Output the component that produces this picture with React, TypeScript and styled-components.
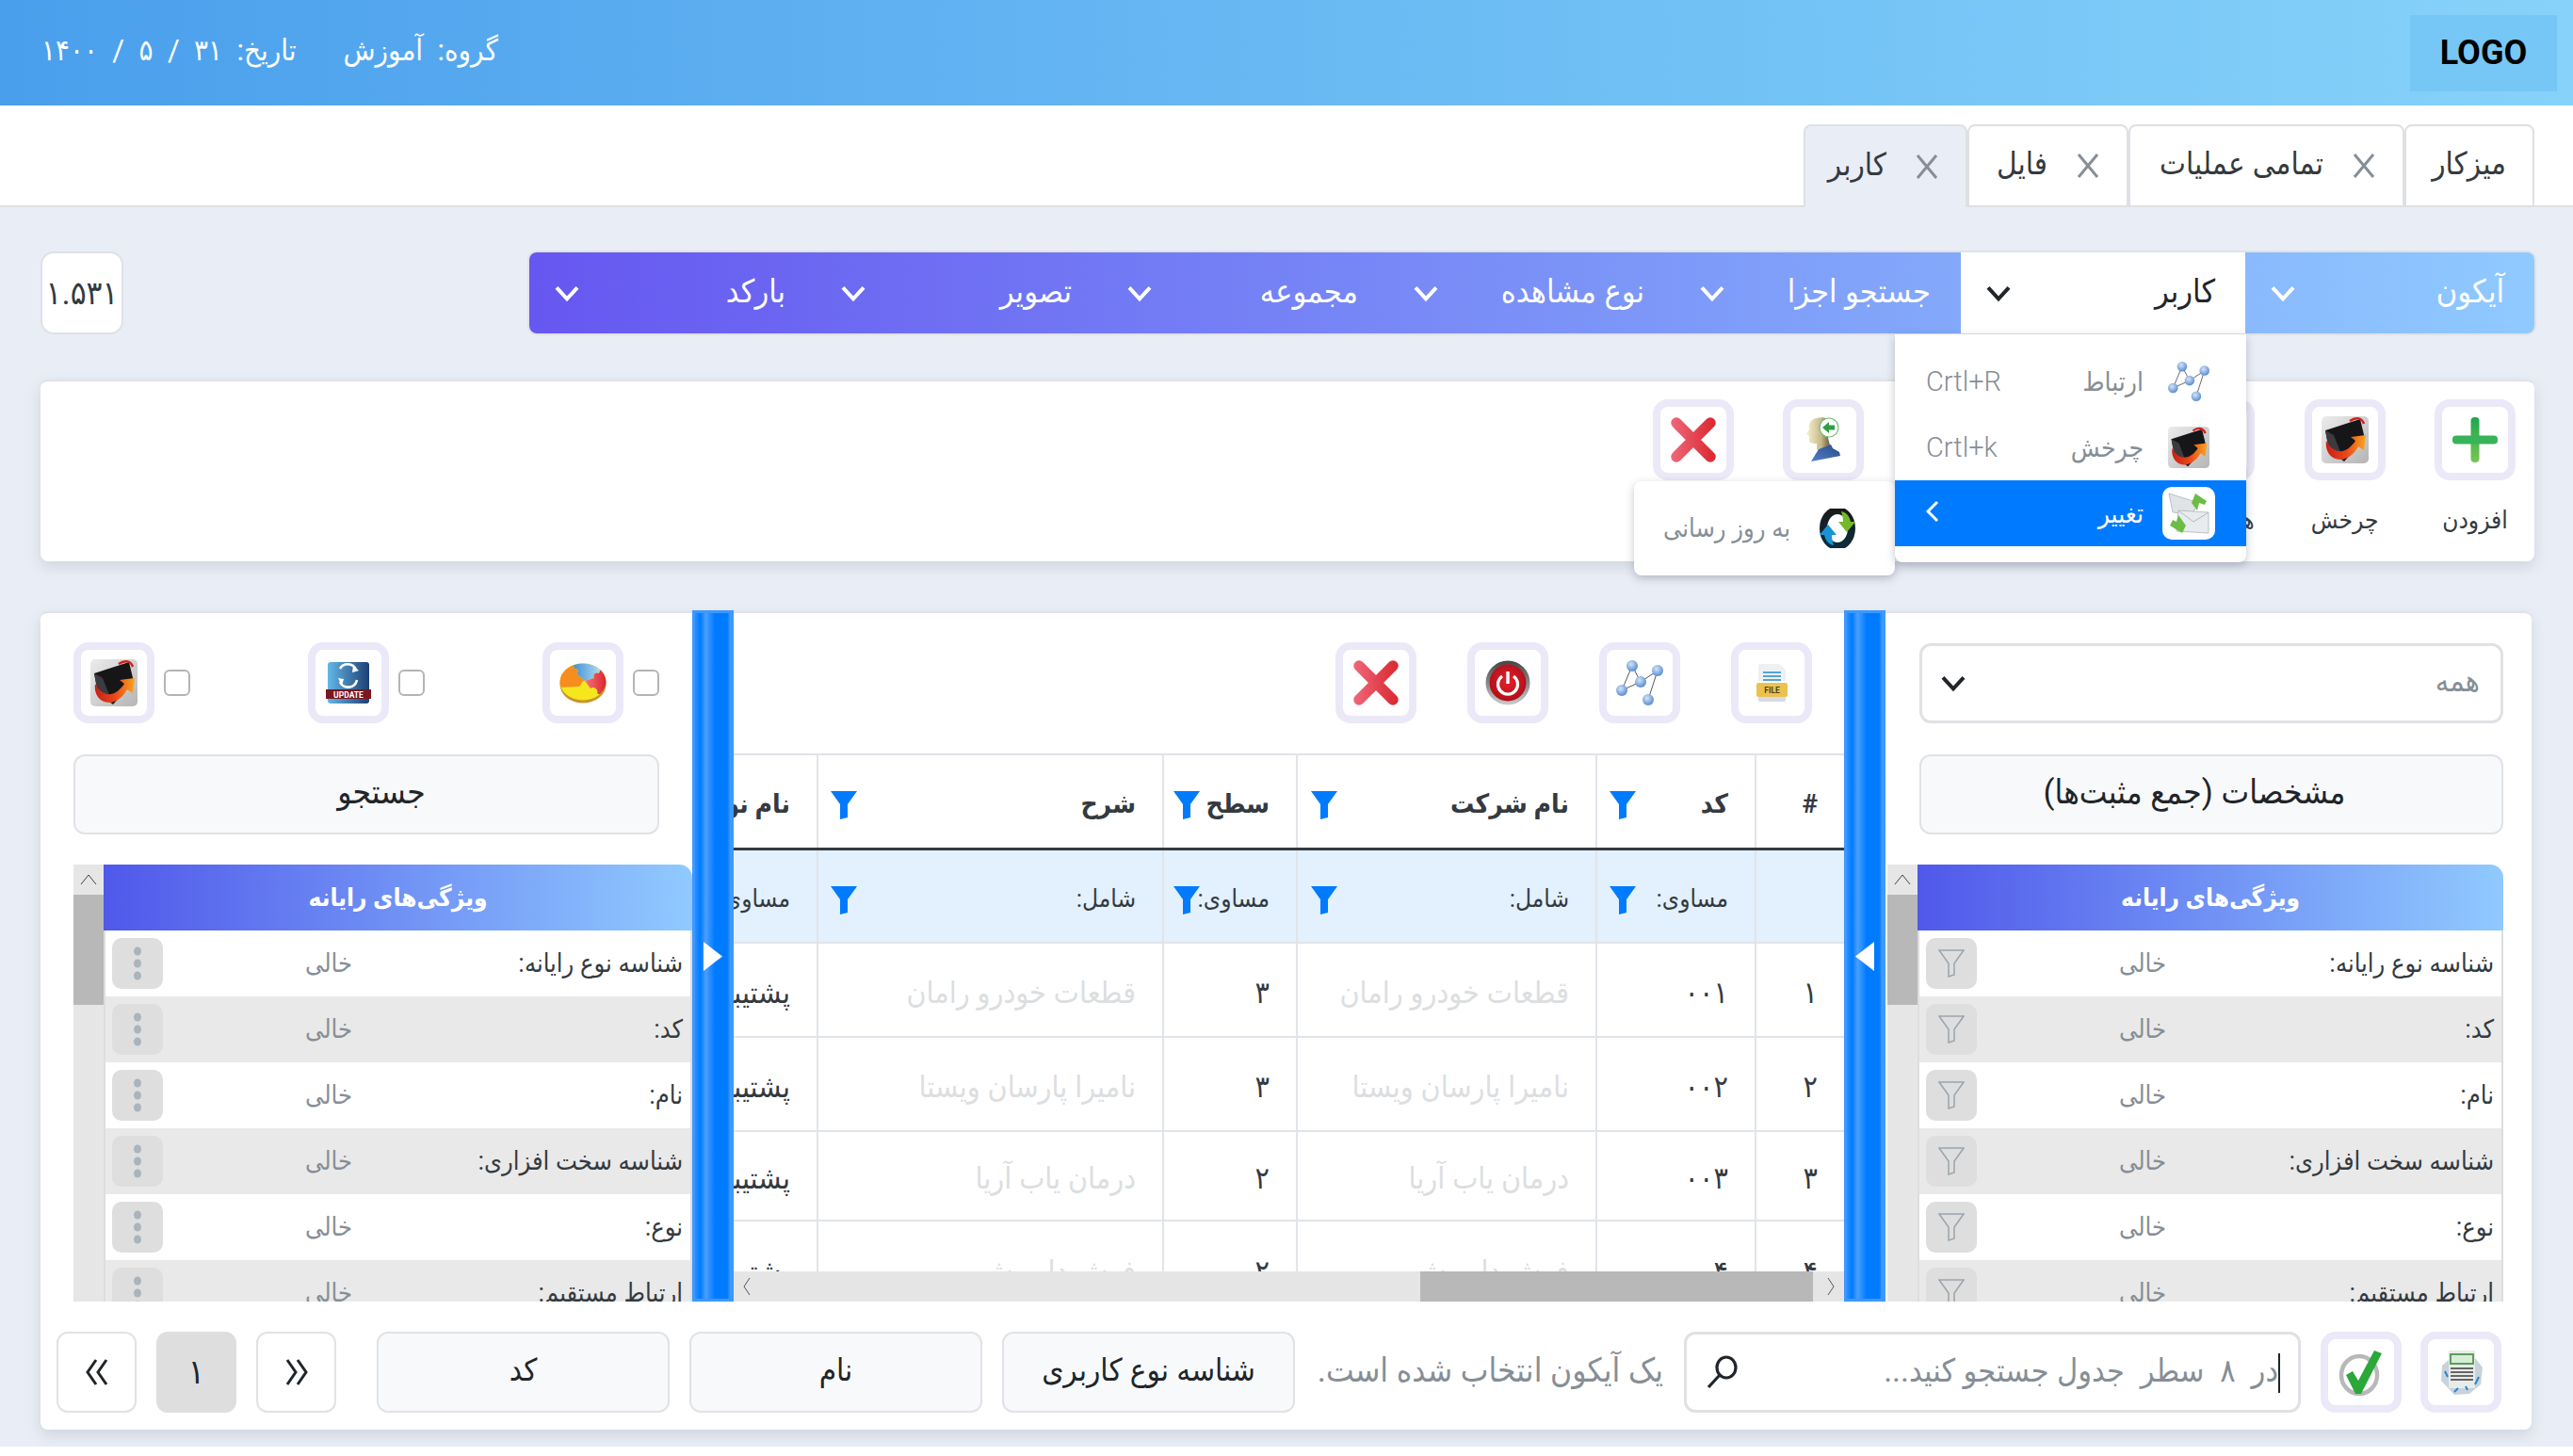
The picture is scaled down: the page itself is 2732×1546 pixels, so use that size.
import React from "react";
import styled, { createGlobalStyle } from "styled-components";

const Global = createGlobalStyle`
  html, body { margin: 0; padding: 0; background: #fff; }
  * { box-sizing: border-box; }
  body { font-family: Roboto, "DejaVu Sans Condensed", "DejaVu Sans", sans-serif; color: #212529; }
`;

const Page = styled.div`
  width: 2732px;
  height: 1536px;
  background: #e9edf5;
  position: relative;
  overflow: hidden;
  direction: rtl;
  font-size: 26px;
`;

const Header = styled.header`
  height: 112px;
  background: linear-gradient(90deg, #4a9fec, #86d2fa);
  display: flex;
  align-items: center;
  justify-content: space-between;
  padding: 0 17px 0 44px;
  color: #fff;
`;
const Logo = styled.div`
  width: 156px;
  height: 81px;
  background: #76c7f5;
  color: #000;
  direction: ltr;
  font-weight: 700;
  font-size: 36px;
  display: flex;
  align-items: center;
  justify-content: center;
`;
const HeaderInfo = styled.div`
  display: flex;
  gap: 50px;
  font-size: 31px;
  color: #fff;
  padding-bottom: 6px;
`;

const TabBar = styled.div`
  height: 108px;
  background: #fff;
  border-bottom: 2px solid #dee0e4;
  display: flex;
  align-items: flex-end;
  padding: 0 41px;
`;
const Tab = styled.div<{ $active?: boolean; $w: number }>`
  width: ${(p) => p.$w}px;
  height: 88px;
  margin-bottom: -2px;
  background: ${(p) => (p.$active ? "#e9edf5" : "#fff")};
  border: 2px solid #dee0e4;
  border-bottom: ${(p) => (p.$active ? "none" : "2px solid #dee0e4")};
  border-radius: 8px 8px 0 0;
  display: flex;
  align-items: center;
  padding: 0 28px;
  gap: 30px;
  font-size: 33px;
  color: #343a40;
  white-space: nowrap;
`;
const TabLabel = styled.span`
  margin-top: -5px;
`;
const TabClose = styled.svg`
  width: 26px;
  height: 26px;
  stroke: #868e96;
  stroke-width: 3;
  fill: none;
  flex: none;
`;

const NavRow = styled.div`
  display: flex;
  justify-content: space-between;
  padding: 48px 41px 0 43px;
  height: 183px;
`;
const NavBar = styled.nav`
  width: 2129px;
  height: 86px;
  display: grid;
  grid-template-columns: 307px 302px repeat(5, 1fr);
  border-radius: 8px;
  background: linear-gradient(270deg, #8fcaff 0%, #6657f0 100%);
  box-shadow: 0 0 0 2px #dfe1e6;
`;
const NavItem = styled.div<{ $open?: boolean }>`
  display: flex;
  align-items: center;
  justify-content: space-between;
  padding: 0 32px 0 27px;
  font-size: 34px;
  color: ${(p) => (p.$open ? "#212529" : "#fff")};
  background: ${(p) => (p.$open ? "#fff" : "transparent")};
`;
const NavLabel = styled.span`
  margin-top: -4px;
`;
const Version = styled.div`
  width: 88px;
  height: 88px;
  margin-top: -1px;
  background: #fff;
  border: 2px solid #dfe1e6;
  border-radius: 14px;
  display: flex;
  align-items: center;
  justify-content: center;
  font-size: 35px;
  color: #343a40;
`;

const Card = styled.section`
  background: #fff;
  border-radius: 8px;
  border-top: 2px solid #e0e2e6;
  box-shadow: 0 6px 14px rgba(120, 130, 150, 0.22);
`;
const ActionsCard = styled(Card)`
  margin: 0 41px 0 43px;
  height: 193px;
  padding: 19px 20px 0 0;
  display: flex;
  gap: 52.4px;
  position: relative;
`;
const ActionItem = styled.div`
  width: 86px;
  display: flex;
  flex-direction: column;
  align-items: center;
  font-size: 26px;
  color: #343a40;
  white-space: nowrap;
`;
const ActionLabel = styled.div`
  margin-top: 27px;
`;
const IconBtn = styled.div`
  width: 86px;
  height: 86px;
  flex: none;
  background: #fff;
  border: 8px solid #ebe8f7;
  border-radius: 16px;
  display: flex;
  align-items: center;
  justify-content: center;
`;

const Dropdown = styled.div`
  position: absolute;
  left: 2012px;
  top: 355px;
  width: 373px;
  height: 242px;
  padding-top: 15px;
  background: #fff;
  border-radius: 0 0 8px 8px;
  box-shadow: 0 3px 10px rgba(80, 90, 110, 0.35);
  z-index: 5;
`;
const MenuRow = styled.div<{ $on?: boolean }>`
  height: 70px;
  padding: 0 33px;
  display: flex;
  align-items: center;
  gap: 20px;
  font-size: 28px;
  color: ${(p) => (p.$on ? "#fff" : "#868e96")};
  background: ${(p) => (p.$on ? "#007bff" : "transparent")};
`;
const MenuIconBox = styled.div<{ $on?: boolean }>`
  width: 56px;
  height: 56px;
  flex: none;
  display: flex;
  align-items: center;
  justify-content: center;
  background: ${(p) => (p.$on ? "#fff" : "transparent")};
  border-radius: 10px;
`;
const MenuShortcut = styled.span`
  margin-right: auto;
  direction: ltr;
  font-size: 29px;
  font-weight: 300;
`;
const SubMenu = styled.div`
  position: absolute;
  left: 1735px;
  top: 511px;
  width: 277px;
  height: 100px;
  padding: 0 41px 0 0;
  display: flex;
  align-items: center;
  gap: 30px;
  background: #fff;
  border-radius: 8px;
  box-shadow: 0 3px 10px rgba(80, 90, 110, 0.35);
  font-size: 27px;
  color: #868e96;
  white-space: nowrap;
  z-index: 4;
`;

const MainCard = styled(Card)`
  margin: 53px 44px 0 43px;
  height: 869px;
  padding: 0 30px 0 35px;
  display: flex;
  flex-direction: column;
`;
const MainTop = styled.div`
  height: 731px;
  display: flex;
  flex: none;
`;
const RightCol = styled.div`
  width: 656px;
  flex: none;
  padding-top: 31px;
  display: flex;
  flex-direction: column;
`;
const LeftCol = styled.div`
  width: 657px;
  flex: none;
  padding-top: 31px;
  display: flex;
  flex-direction: column;
  align-items: flex-end;
`;
const CenterCol = styled.div`
  flex: 1;
  min-width: 0;
  display: flex;
  flex-direction: column;
  overflow: hidden;
`;
const Splitter = styled.div`
  width: 44px;
  flex: none;
  margin-top: -3px;
  height: 734px;
  background: linear-gradient(90deg, #2a8fff 0%, #007bff 15%, #4b9fff 30%, #007bff 55%, #007bff 90%, #4b9fff 100%);
  border: 3px solid #3d98ff;
  display: flex;
  align-items: center;
  justify-content: center;
  position: relative;
  z-index: 2;
`;
const SelectBox = styled.div`
  width: 620px;
  height: 85px;
  margin-top: 1px;
  border: 3px solid #e0e1e4;
  border-radius: 12px;
  display: flex;
  align-items: center;
  justify-content: space-between;
  padding: 0 22px 0 20px;
  font-size: 32px;
  color: #868e96;
`;
const SelectLabel = styled.span`
  margin-top: -5px;
`;
const BlockBtn = styled.div<{ $w: number; $pr?: number; $pl?: number }>`
  width: ${(p) => p.$w}px;
  height: 85px;
  margin-top: 33px;
  background: #f8f9fb;
  border: 2px solid #e0e2e6;
  border-radius: 12px;
  display: flex;
  align-items: center;
  justify-content: center;
  padding: 0 ${(p) => p.$pr ?? 0}px 5px ${(p) => p.$pl ?? 0}px;
  font-size: 35px;
  color: #212529;
`;
const PanelWrap = styled.div`
  margin-top: 32px;
  height: 464px;
  width: 100%;
  display: flex;
  overflow: hidden;
`;
const RightPanelWrap = styled(PanelWrap)`
  padding-left: 2px;
`;
const Panel = styled.div`
  flex: 1;
  min-width: 0;
`;
const PanelHead = styled.div`
  height: 70px;
  background: linear-gradient(270deg, #90caff, #5058ea);
  border-radius: 0 14px 0 0;
  color: #fff;
  font-size: 26px;
  font-weight: 700;
  display: flex;
  align-items: center;
  justify-content: center;
`;
const PanelRow = styled.div<{ $even: boolean; $col: number }>`
  height: 70px;
  display: grid;
  grid-template-columns: ${(p) => p.$col}px 1fr 70px;
  align-items: center;
  background: ${(p) => (p.$even ? "#e9e9e9" : "#fff")};
  border-left: 2px solid #ddd;
  border-right: 2px solid #ddd;
  padding-right: 8px;
  font-size: 27px;
  color: #343a40;
  white-space: nowrap;
`;
const PanelValue = styled.span`
  color: #868e96;
`;
const RowBtn = styled.div`
  width: 54px;
  height: 54px;
  margin-left: 7px;
  background: #dedede;
  border-radius: 10px;
  justify-self: end;
  display: flex;
  align-items: center;
  justify-content: center;
`;
const VScroll = styled.div`
  width: 32px;
  flex: none;
  background: #e6e6e6;
  display: flex;
  flex-direction: column;
`;
const ScrollCap = styled.div`
  height: 32px;
  display: flex;
  align-items: center;
  justify-content: center;
`;
const VThumb = styled.div`
  height: 117px;
  background: #b8b8b8;
`;
const ToolRow = styled.div`
  display: flex;
  padding: 31px 34px 0 0;
  gap: 54px;
  height: 149px;
  flex: none;
`;
const LeftTools = styled.div`
  display: flex;
  justify-content: space-between;
  width: 622px;
  height: 86px;
  flex: none;
`;
const CheckGroup = styled.div`
  display: flex;
  align-items: center;
  gap: 10px;
  height: 86px;
`;
const Check = styled.div`
  width: 28px;
  height: 28px;
  border: 2px solid #b4b4b4;
  border-radius: 6px;
`;
const TableArea = styled.div`
  flex: 1;
  position: relative;
  overflow: hidden;
`;
const Grid = styled.div`
  display: grid;
  grid-template-columns: 95px 169px 318px 142px 367px 200px;
  grid-template-rows: 2px 98px 3px 97px 2px 98px 2px 98px 2px 93px 2px 100px;
  width: 1291px;
`;
const Cell = styled.div<{ $bg?: string; $c?: string; $b?: boolean; $fs?: number }>`
  position: relative;
  display: flex;
  align-items: center;
  padding: 5px 28px 0 0;
  white-space: nowrap;
  background: ${(p) => p.$bg ?? "#fff"};
  color: ${(p) => p.$c ?? "#343a40"};
  font-size: ${(p) => p.$fs ?? 32}px;
  font-weight: ${(p) => (p.$b ? 700 : 400)};
  border-left: 2px solid #e1e4e8;
`;
const FilterIcon = styled.svg<{ $off: number }>`
  position: absolute;
  left: ${(p) => p.$off}px;
  top: 50%;
  margin-top: -11px;
  width: 28px;
  height: 30px;
  fill: #007bff;
`;
const RowLine = styled.div<{ $c: string }>`
  grid-column: 1 / -1;
  background: ${(p) => p.$c};
`;
const HScroll = styled.div`
  position: absolute;
  left: 0;
  right: 0;
  bottom: 0;
  height: 32px;
  background: #e5e5e5;
  display: flex;
  align-items: center;
  justify-content: space-between;
  padding: 0 10px;
`;
const HThumb = styled.div`
  position: absolute;
  right: 33px;
  top: 0;
  bottom: 0;
  width: 417px;
  background: #b8b8b8;
`;

const BottomBar = styled.div`
  margin: 32px 2px 0 -17px;
  height: 86px;
  display: flex;
  align-items: stretch;
`;
const SearchBox = styled.div`
  width: 655px;
  flex: none;
  margin-right: 21px;
  border: 3px solid #e0e1e4;
  border-radius: 12px;
  display: flex;
  align-items: center;
  justify-content: space-between;
  padding: 0 19px 0 21px;
  font-size: 34px;
  color: #868e96;
  white-space: nowrap;
`;
const Caret = styled.span`
  display: inline-block;
  width: 2px;
  height: 42px;
  background: #212529;
  vertical-align: middle;
`;
const Hint = styled.div`
  width: 367px;
  flex: none;
  margin: 0 22px 0 24px;
  padding-bottom: 4px;
  font-size: 35px;
  color: #868e96;
  display: flex;
  align-items: center;
  white-space: nowrap;
`;
const FootBtn = styled.div`
  width: 311px;
  flex: none;
  background: #f8f9fb;
  border: 2px solid #e0e2e6;
  border-radius: 12px;
  display: flex;
  align-items: center;
  justify-content: center;
  padding-bottom: 5px;
  font-size: 33px;
  color: #212529;
  margin-left: 21px;
`;
const PageBtn = styled.div<{ $on?: boolean }>`
  width: 85px;
  flex: none;
  background: ${(p) => (p.$on ? "#dedede" : "#fff")};
  border: 2px solid ${(p) => (p.$on ? "#dedede" : "#e0e2e6")};
  border-radius: 12px;
  display: flex;
  align-items: center;
  justify-content: center;
  font-size: 36px;
  color: #212529;
  margin-left: 21px;
`;
const Spacer = styled.div<{ $w: number }>`
  width: ${(p) => p.$w}px;
  flex: none;
`;

/* ---------- drawings ---------- */
const Chevron = ({ c = "#fff", s = 26 }: { c?: string; s?: number }) => (
  <svg width={s} height={s * 0.8} viewBox="0 0 26 20" fill="none" stroke={c} strokeWidth="4">
    <path d="M2 4 L13 16 L24 4" />
  </svg>
);
const XMark = () => (
  <TabClose viewBox="0 0 26 26">
    <path d="M3 1 L23 25 M23 1 L3 25" />
  </TabClose>
);
const PlusIcon = () => (
  <svg width="50" height="50" viewBox="0 0 50 50">
    <defs>
      <linearGradient id="pg" x1="0" y1="0" x2="0" y2="1">
        <stop offset="0" stopColor="#1fa650" />
        <stop offset="1" stopColor="#79c653" />
      </linearGradient>
    </defs>
    <rect x="20.5" y="1" width="9" height="48" rx="4" fill="url(#pg)" />
    <rect x="1" y="20.5" width="48" height="9" rx="4" fill="#38b35a" />
  </svg>
);
const RedX = () => (
  <svg width="50" height="50" viewBox="0 0 50 50">
    <defs>
      <linearGradient id="rx" gradientUnits="userSpaceOnUse" x1="0" y1="25" x2="50" y2="25">
        <stop offset="0" stopColor="#f0697c" />
        <stop offset="1" stopColor="#d9252c" />
      </linearGradient>
    </defs>
    <path d="M7 7 L43 43 M43 7 L7 43" fill="none" stroke="url(#rx)" strokeWidth="11.5" strokeLinecap="round" />
  </svg>
);
const NetIcon = ({ s = 50 }: { s?: number }) => {
  const pts: [number, number][] = [
    [17, 7], [44, 12], [26, 24], [6, 33], [34, 43],
  ];
  return (
    <svg width={s} height={s} viewBox="0 0 50 50">
      <defs>
        <radialGradient id="ng" cx="0.4" cy="0.35" r="0.7">
          <stop offset="0" stopColor="#d5e4f7" />
          <stop offset="1" stopColor="#4f86cf" />
        </radialGradient>
      </defs>
      <path d="M17 7 L26 24 L44 12 L34 43 M17 7 L6 33 L26 24" fill="none" stroke="#555" strokeWidth="1" />
      {pts.map(([x, y], i) => (
        <circle key={i} cx={x} cy={y} r="6" fill="url(#ng)" />
      ))}
    </svg>
  );
};
const BookIcon = ({ s = 50 }: { s?: number }) => (
  <svg width={s} height={s} viewBox="0 0 50 50">
    <defs>
      <linearGradient id="bk" x1="0" y1="0" x2="1" y2="1">
        <stop offset="0" stopColor="#ececec" />
        <stop offset="1" stopColor="#b5b5b5" />
      </linearGradient>
      <linearGradient id="ar" x1="0" y1="0" x2="1" y2="0">
        <stop offset="0" stopColor="#c81e16" />
        <stop offset="0.5" stopColor="#e8471a" />
        <stop offset="1" stopColor="#fba51c" />
      </linearGradient>
    </defs>
    <rect x="0" y="0" width="50" height="50" rx="5" fill="url(#bk)" />
    <path d="M4 15 L41 3 L46 24 L24 48 L8 36 Z" fill="#161618" />
    <path d="M4 15 L13 20 L24 48 L8 36 Z" fill="#3c3c40" />
    <path d="M30 5 C37 0 43 2 45 8" fill="none" stroke="#d2201c" strokeWidth="2.5" />
    <path d="M5 26 C3 40 14 49 25 45 C33 42 37 36 39 32 L45 36 L47 20 L31 22 L36 26 C32 32 27 36 22 37 C14 38 9 33 5 26 Z" fill="url(#ar)" />
  </svg>
);
const HeadIcon = () => (
  <svg width="38" height="48" viewBox="0 0 38 48">
    <defs>
      <linearGradient id="hd" x1="0" y1="0" x2="1" y2="0">
        <stop offset="0" stopColor="#f7f2cf" />
        <stop offset="0.6" stopColor="#c9b98a" />
        <stop offset="1" stopColor="#5f5238" />
      </linearGradient>
      <linearGradient id="sh" x1="0" y1="1" x2="1" y2="0">
        <stop offset="0" stopColor="#4f82c9" />
        <stop offset="1" stopColor="#2b4a86" />
      </linearGradient>
    </defs>
    <path d="M12 1 C5 2 3 8 4 13 L1 18 L4 20 L4 25 C4 28 8 28 12 28 L12 35 L26 30 L24 22 L27 14 L24 2 C20 0 16 0 12 1 Z" fill="url(#hd)" />
    <path d="M6 47 L14 34 L27 29 L29 33 L36 37 L37 41 Z" fill="url(#sh)" />
    <circle cx="25" cy="11" r="10" fill="#fff" stroke="#6cc070" strokeWidth="1.2" />
    <path d="M18 11 L25 5 L25 8.5 L31 8.5 L31 13.5 L25 13.5 L25 17 Z" fill="#2f9e44" />
  </svg>
);
const EnvelopeIcon = () => (
  <svg width="46" height="46" viewBox="0 0 46 46">
    <path d="M2 2 L34 12 L26 24 L6 22 Z" fill="#dfe3e6" stroke="#aeb3b8" strokeWidth="0.8" />
    <path d="M12 20 L44 22 L44 44 L10 42 Z" fill="#e9ecee" stroke="#aeb3b8" strokeWidth="0.8" />
    <path d="M12 20 L28 32 L44 22" fill="none" stroke="#b5b9bd" strokeWidth="1" />
    <path d="M30 2 L42 10 L40 14 L34 12 L32 20 L26 12 Z" fill="#6cbd45" />
    <path d="M16 44 L3 36 L6 30 L10 32 L12 25 L20 36 Z" fill="#6cbd45" />
  </svg>
);
const SyncIcon = () => (
  <svg width="40" height="42" viewBox="0 0 40 42">
    <defs>
      <linearGradient id="sy" x1="0" y1="0" x2="0" y2="1">
        <stop offset="0" stopColor="#1a1a1a" />
        <stop offset="1" stopColor="#0d2c3c" />
      </linearGradient>
    </defs>
    <ellipse cx="20" cy="21" rx="15" ry="19" fill="none" stroke="url(#sy)" strokeWidth="8" />
    <path d="M24 3 C30 4 33 9 34 14 L39 14 L30 25 L21 14 L26 14 C26 10 25 6 24 3 Z" fill="#75b82c" />
    <path d="M16 39 C10 38 7 33 6 28 L1 28 L10 17 L19 28 L14 28 C14 32 15 36 16 39 Z" fill="#1894d6" />
  </svg>
);
const PuzzleIcon = () => (
  <svg width="50" height="43" viewBox="0 0 50 43">
    <defs>
      <clipPath id="pz"><ellipse cx="25" cy="20" rx="24.5" ry="19.5" /></clipPath>
      <linearGradient id="pb" x1="0" y1="0" x2="1" y2="0">
        <stop offset="0" stopColor="#3f8ed1" />
        <stop offset="1" stopColor="#b9e2f5" />
      </linearGradient>
      <linearGradient id="pr2" x1="0" y1="0" x2="1" y2="0">
        <stop offset="0" stopColor="#f7757a" />
        <stop offset="1" stopColor="#d9242c" />
      </linearGradient>
    </defs>
    <ellipse cx="25" cy="22.5" rx="24.5" ry="20" fill="#c9952a" />
    <g clipPath="url(#pz)">
      <rect width="50" height="43" fill="#f5e61e" />
      <path d="M0 0 H14 L16 6 C20 5 21 10 18 11 L27 19 C22 19 24 26 19 25 L0 26 Z" fill="#f68d1e" />
      <path d="M14 0 H46 L42 11 C38 9 35 13 37 16 L27 19 L18 11 C21 10 20 5 16 6 Z" fill="url(#pb)" />
      <path d="M46 0 H50 V38 L40 32 C42 28 36 24 33 27 L27 19 L37 16 C35 13 38 9 42 11 Z" fill="url(#pr2)" />
    </g>
  </svg>
);
const UpdateIcon = () => (
  <svg width="48" height="46" viewBox="0 0 48 46">
    <defs>
      <linearGradient id="ub" x1="0" y1="0" x2="1" y2="0">
        <stop offset="0" stopColor="#62b8e6" />
        <stop offset="1" stopColor="#1c3f73" />
      </linearGradient>
    </defs>
    <rect x="2" y="1" width="44" height="44" rx="3" fill="url(#ub)" />
    <path d="M15 8 A9.5 9.5 0 0 1 32 9 M33 20 A9.5 9.5 0 0 1 15 22" fill="none" stroke="#fff" strokeWidth="2.6" />
    <path d="M29 5 L35 10 L28 12 Z M19 19 L13 18 L17 26 Z" fill="#fff" />
    <rect x="0" y="30" width="48" height="10" fill="#7c1620" />
    <text x="24" y="38.5" textAnchor="middle" fontFamily="Roboto" fontSize="8.5" fontWeight="700" fill="#fff">UPDATE</text>
  </svg>
);
const FileIcon = () => (
  <svg width="33" height="40" viewBox="0 0 33 40">
    <path d="M2 2 Q2 0 4 0 L24 0 L31 6 L31 18 L2 18 Z" fill="#eef1f3" />
    <rect x="7" y="8" width="19" height="2" fill="#54a4d8" />
    <rect x="7" y="12" width="19" height="2" fill="#54a4d8" />
    <rect x="7" y="16" width="19" height="2" fill="#54a4d8" />
    <path d="M2 35 H31 V39 Q31 40 29 40 H4 Q2 40 2 39 Z" fill="#d8dae8" />
    <rect x="0" y="20" width="33" height="15" rx="2" fill="#ebc24f" />
    <text x="16.5" y="31" textAnchor="middle" fontFamily="Roboto" fontSize="8.5" fontWeight="700" fill="#4d4020">FILE</text>
  </svg>
);
const PowerIcon = () => (
  <svg width="48" height="48" viewBox="0 0 48 48">
    <defs>
      <radialGradient id="pw" cx="0.5" cy="0.45" r="0.6">
        <stop offset="0" stopColor="#e8202c" />
        <stop offset="1" stopColor="#a80e18" />
      </radialGradient>
      <linearGradient id="prim" x1="0" y1="0" x2="0" y2="1">
        <stop offset="0" stopColor="#444" />
        <stop offset="1" stopColor="#ccc" />
      </linearGradient>
    </defs>
    <circle cx="24" cy="24" r="23.5" fill="url(#prim)" />
    <circle cx="24" cy="24" r="19.5" fill="url(#pw)" />
    <path d="M18 17 A10.5 10.5 0 1 0 30 17" fill="none" stroke="#fff" strokeWidth="3.2" />
    <path d="M24 12 L24 25" stroke="#fff" strokeWidth="3.4" />
  </svg>
);
const CheckIcon = () => (
  <svg width="48" height="50" viewBox="0 0 48 50">
    <ellipse cx="22" cy="28" rx="19" ry="20" fill="none" stroke="#b8b8b8" strokeWidth="4.5" />
    <path d="M8 28 L15 24 L21 34 L38 2 L46 5 L24 48 L18 48 Z" fill="#2aa83a" />
  </svg>
);
const PaperIcon = () => (
  <svg width="50" height="50" viewBox="0 0 50 50">
    <path d="M5 18 L12 12 L40 10 L48 20 L46 38 L34 48 L18 49 L4 34 Z" fill="#c8d2da" />
    <rect x="12" y="2" width="28" height="40" fill="#e8ece8" />
    <rect x="13" y="5" width="26" height="12" fill="#5c9e5c" />
    <rect x="15" y="7" width="22" height="8" fill="#d8ecd8" />
    <rect x="14" y="20" width="24" height="2" fill="#666" />
    <rect x="14" y="24" width="24" height="2" fill="#666" />
    <rect x="14" y="28" width="24" height="2" fill="#666" />
    <rect x="14" y="32" width="24" height="2" fill="#666" />
    <path d="M8 24 L11 30 M40 38 L44 30 M18 46 L22 42 M32 44 L30 40" stroke="#2a84d0" strokeWidth="2" />
  </svg>
);
const Funnel = () => (
  <svg width="28" height="30" viewBox="0 0 28 30" fill="none" stroke="#9aa4ad" strokeWidth="1.5">
    <path d="M1 1 L27 1 L17 15 L17 27 L11 29 L11 15 Z" />
  </svg>
);
const Dots = () => (
  <svg width="10" height="36" viewBox="0 0 10 36" fill="#a9b4bc">
    <ellipse cx="5" cy="5" rx="4" ry="4.5" />
    <ellipse cx="5" cy="18" rx="4" ry="4.5" />
    <ellipse cx="5" cy="31" rx="4" ry="4.5" />
  </svg>
);
const BlueFunnel = ({ off }: { off: number }) => (
  <FilterIcon viewBox="0 0 28 30" $off={off}>
    <path d="M0 0 H28 L18 14 V28 L10 30 V14 Z" />
  </FilterIcon>
);
const Caretup = () => (
  <svg width="18" height="12" viewBox="0 0 18 12" fill="none" stroke="#444" strokeWidth="1">
    <path d="M1 11 L9 1 L17 11" />
  </svg>
);
const ArrowSide = ({ d }: { d: "l" | "r" }) => (
  <svg width="8" height="20" viewBox="0 0 8 20" fill="none" stroke="#555" strokeWidth="1">
    <path d={d === "l" ? "M7 1 L1 10 L7 19" : "M1 1 L7 10 L1 19"} />
  </svg>
);
const Tri = ({ d }: { d: "l" | "r" }) => (
  <svg width="20" height="31" viewBox="0 0 20 31" fill="#fff">
    <path d={d === "l" ? "M0 15.5 L20 0 V31 Z" : "M20 15.5 L0 0 V31 Z"} />
  </svg>
);
const MagIcon = () => (
  <svg width="36" height="36" viewBox="0 0 36 36" fill="none" stroke="#212529" strokeWidth="3.2">
    <ellipse cx="21" cy="13" rx="10" ry="11" />
    <path d="M14 21 L2 34" />
  </svg>
);
const DblChevron = ({ d }: { d: "l" | "r" }) => (
  <svg width="26" height="30" viewBox="0 0 26 30" fill="none" stroke="#212529" strokeWidth="3">
    {d === "l" ? <path d="M12 2 L3 15 L12 28 M23 2 L14 15 L23 28" /> : <path d="M3 2 L12 15 L3 28 M14 2 L23 15 L14 28" />}
  </svg>
);
const SmallChevron = () => (
  <svg width="14" height="24" viewBox="0 0 14 24" fill="none" stroke="#fff" strokeWidth="3">
    <path d="M12 2 L2 12 L12 22" />
  </svg>
);

const panelRows = ["شناسه نوع رایانه:", "کد:", "نام:", "شناسه سخت افزاری:", "نوع:", "ارتباط مستقیم:"];
const Rows = ({ icon, col }: { icon: React.ReactNode; col: number }) => (
  <>
    {panelRows.map((l, i) => (
      <PanelRow key={l} $even={i % 2 === 1} $col={col}>
        <span>{l}</span>
        <PanelValue>خالی</PanelValue>
        <RowBtn>{icon}</RowBtn>
      </PanelRow>
    ))}
  </>
);
const tableRows = [
  ["۱", "۰۰۱", "قطعات خودرو رامان", "۳", "قطعات خودرو رامان", "پشتیبانی"],
  ["۲", "۰۰۲", "نامیرا پارسان ویستا", "۳", "نامیرا پارسان ویستا", "پشتیبانی"],
  ["۳", "۰۰۳", "درمان یاب آریا", "۲", "درمان یاب آریا", "پشتیبانی"],
  ["۴", "۰۰۴", "فرش داریوش", "۲", "فرش داریوش", "پشتیبانی"],
];
const lightCols = [2, 4];
const filterOffsets = [13, 14, 10, 13, 14];
const FILTER_BG = "#e3f0fe";
const HEAD_FS = 28;

export default function App() {
  return (
    <Page>
      <Global />
      <Header>
        <Logo>LOGO</Logo>
        <HeaderInfo>
          <span>گروه:&nbsp; آموزش</span>
          <span>تاریخ:&nbsp; ۳۱ &nbsp;/&nbsp; ۵ &nbsp;/&nbsp; ۱۴۰۰</span>
        </HeaderInfo>
      </Header>
      <TabBar>
        <Tab $w={138}><TabLabel>میزکار</TabLabel></Tab>
        <Tab $w={293}><XMark /><TabLabel>تمامی عملیات</TabLabel></Tab>
        <Tab $w={171}><XMark /><TabLabel>فایل</TabLabel></Tab>
        <Tab $w={174} $active><XMark /><TabLabel>کاربر</TabLabel></Tab>
      </TabBar>
      <NavRow>
        <NavBar>
          <NavItem><NavLabel>آیکون</NavLabel><Chevron /></NavItem>
          <NavItem $open><NavLabel>کاربر</NavLabel><Chevron c="#212529" /></NavItem>
          <NavItem><NavLabel>جستجو اجزا</NavLabel><Chevron /></NavItem>
          <NavItem><NavLabel>نوع مشاهده</NavLabel><Chevron /></NavItem>
          <NavItem><NavLabel>مجموعه</NavLabel><Chevron /></NavItem>
          <NavItem><NavLabel>تصویر</NavLabel><Chevron /></NavItem>
          <NavItem><NavLabel>بارکد</NavLabel><Chevron /></NavItem>
        </NavBar>
        <Version>۱.۵۳۱</Version>
      </NavRow>
      <ActionsCard>
        <ActionItem><IconBtn><PlusIcon /></IconBtn><ActionLabel>افزودن</ActionLabel></ActionItem>
        <ActionItem><IconBtn><BookIcon /></IconBtn><ActionLabel>چرخش</ActionLabel></ActionItem>
        <ActionItem><IconBtn /><ActionLabel>هماهنگی</ActionLabel></ActionItem>
        <ActionItem><IconBtn /></ActionItem>
        <ActionItem><IconBtn /></ActionItem>
        <ActionItem><IconBtn><HeadIcon /></IconBtn></ActionItem>
        <ActionItem><IconBtn><RedX /></IconBtn></ActionItem>
      </ActionsCard>
      <Dropdown>
        <MenuRow><MenuIconBox><NetIcon s={44} /></MenuIconBox>ارتباط<MenuShortcut>Crtl+R</MenuShortcut></MenuRow>
        <MenuRow><MenuIconBox><BookIcon s={44} /></MenuIconBox>چرخش<MenuShortcut>Crtl+k</MenuShortcut></MenuRow>
        <MenuRow $on><MenuIconBox $on><EnvelopeIcon /></MenuIconBox>تغییر<MenuShortcut><SmallChevron /></MenuShortcut></MenuRow>
      </Dropdown>
      <SubMenu><SyncIcon />به روز رسانی</SubMenu>
      <MainCard>
        <MainTop>
          <RightCol>
            <SelectBox><SelectLabel>همه</SelectLabel><Chevron c="#212529" /></SelectBox>
            <BlockBtn $w={620} $pr={36} $pl={0}>مشخصات (جمع مثبت‌ها)</BlockBtn>
            <RightPanelWrap>
              <Panel>
                <PanelHead>ویژگی‌های رایانه</PanelHead>
                <Rows icon={<Funnel />} col={348} />
              </Panel>
              <VScroll>
                <ScrollCap><Caretup /></ScrollCap>
                <VThumb />
              </VScroll>
            </RightPanelWrap>
          </RightCol>
          <Splitter><Tri d="l" /></Splitter>
          <CenterCol>
            <ToolRow>
              <IconBtn><FileIcon /></IconBtn>
              <IconBtn><NetIcon /></IconBtn>
              <IconBtn><PowerIcon /></IconBtn>
              <IconBtn><RedX /></IconBtn>
            </ToolRow>
            <TableArea>
              <Grid>
                <RowLine $c="#e0e2e6" />
                <Cell $b $fs={HEAD_FS}>#</Cell>
                <Cell $b $fs={HEAD_FS}>کد<BlueFunnel off={filterOffsets[0]} /></Cell>
                <Cell $b $fs={HEAD_FS}>نام شرکت<BlueFunnel off={filterOffsets[1]} /></Cell>
                <Cell $b $fs={HEAD_FS}>سطح<BlueFunnel off={filterOffsets[2]} /></Cell>
                <Cell $b $fs={HEAD_FS}>شرح<BlueFunnel off={filterOffsets[3]} /></Cell>
                <Cell $b $fs={HEAD_FS}>نام نوع</Cell>
                <RowLine $c="#343a40" />
                <Cell $bg={FILTER_BG} $fs={26}></Cell>
                <Cell $bg={FILTER_BG} $fs={26}>مساوی:<BlueFunnel off={filterOffsets[0]} /></Cell>
                <Cell $bg={FILTER_BG} $fs={26}>شامل:<BlueFunnel off={filterOffsets[1]} /></Cell>
                <Cell $bg={FILTER_BG} $fs={26}>مساوی:<BlueFunnel off={filterOffsets[2]} /></Cell>
                <Cell $bg={FILTER_BG} $fs={26}>شامل:<BlueFunnel off={filterOffsets[3]} /></Cell>
                <Cell $bg={FILTER_BG} $fs={26}>مساوی:</Cell>
                {tableRows.map((r) => (
                  <React.Fragment key={r[0]}>
                    <RowLine $c="#e1e4e8" />
                    {r.map((c, i) => (
                      <Cell key={i} $c={lightCols.includes(i) ? "#dcdee0" : "#343a40"}>{c}</Cell>
                    ))}
                  </React.Fragment>
                ))}
              </Grid>
              <HScroll>
                <HThumb />
                <ArrowSide d="r" />
                <ArrowSide d="l" />
              </HScroll>
            </TableArea>
          </CenterCol>
          <Splitter><Tri d="r" /></Splitter>
          <LeftCol>
            <LeftTools>
              <CheckGroup><Check /><IconBtn><PuzzleIcon /></IconBtn></CheckGroup>
              <CheckGroup><Check /><IconBtn><UpdateIcon /></IconBtn></CheckGroup>
              <CheckGroup><Check /><IconBtn><BookIcon /></IconBtn></CheckGroup>
            </LeftTools>
            <BlockBtn $w={622} $pr={0} $pl={32}>جستجو</BlockBtn>
            <PanelWrap>
              <Panel>
                <PanelHead>ویژگی‌های رایانه</PanelHead>
                <Rows icon={<Dots />} col={351} />
              </Panel>
              <VScroll>
                <ScrollCap><Caretup /></ScrollCap>
                <VThumb />
              </VScroll>
            </PanelWrap>
          </LeftCol>
        </MainTop>
        <BottomBar>
          <IconBtn><PaperIcon /></IconBtn>
          <Spacer $w={20} />
          <IconBtn><CheckIcon /></IconBtn>
          <SearchBox>
            <span><Caret />در&nbsp; ۸ &nbsp;سطر&nbsp; جدول جستجو کنید...</span>
            <MagIcon />
          </SearchBox>
          <Hint>یک آیکون انتخاب شده است.</Hint>
          <FootBtn>شناسه نوع کاربری</FootBtn>
          <FootBtn>نام</FootBtn>
          <FootBtn>کد</FootBtn>
          <Spacer $w={22} />
          <PageBtn><DblChevron d="r" /></PageBtn>
          <PageBtn $on>۱</PageBtn>
          <PageBtn><DblChevron d="l" /></PageBtn>
        </BottomBar>
      </MainCard>
    </Page>
  );
}
